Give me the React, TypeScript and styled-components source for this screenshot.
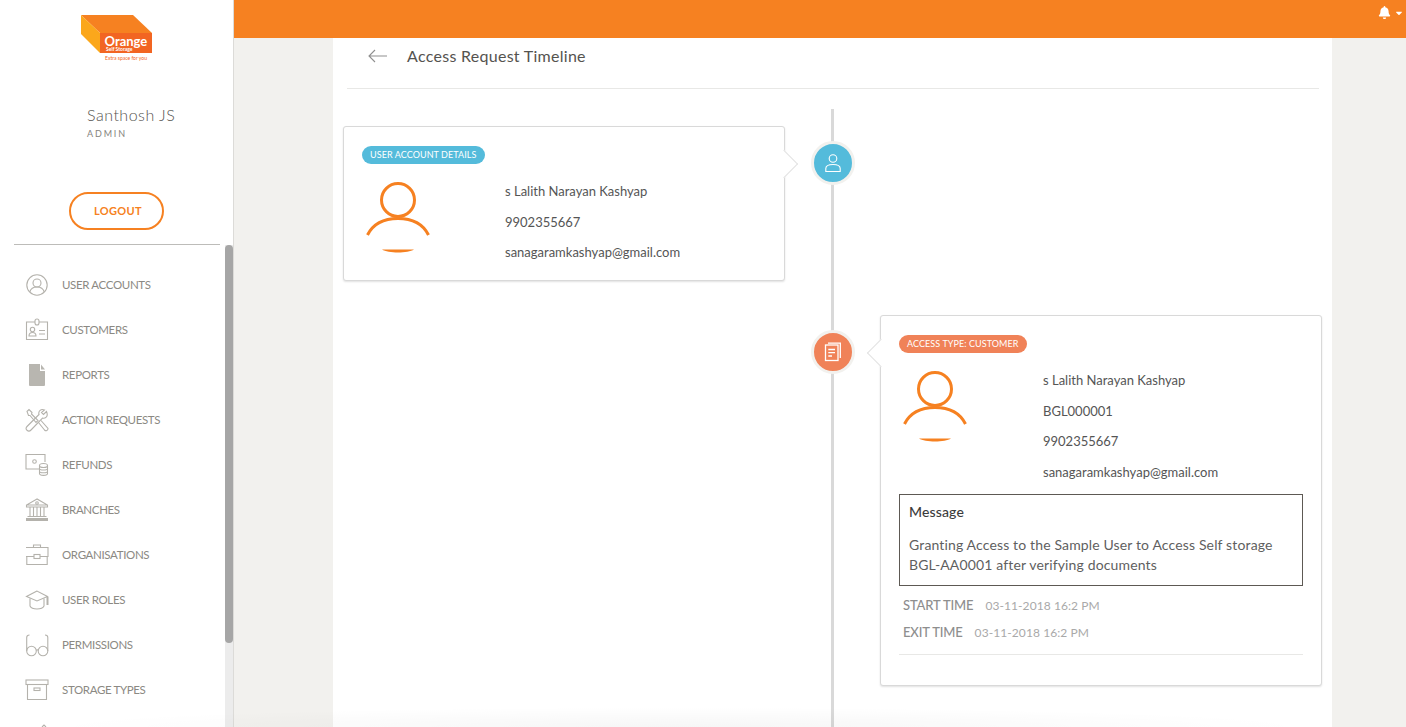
import React from "react";
import styled, { createGlobalStyle } from "styled-components";
import { FaBell, FaCaretDown } from "react-icons/fa";

const Global = createGlobalStyle`
  html, body { margin: 0; height: 100%; overflow: hidden; background: #f2f1ee; }
  * { box-sizing: border-box; }
  body { font-family: Lato, "Noto Sans", sans-serif; color: #4a4a4a; }
`;

const Page = styled.div`
  position: relative;
  display: flex;
  height: 727px;
  overflow: hidden;
`;
const Sidebar = styled.aside`
  flex: 0 0 234px;
  display: flex;
  flex-direction: column;
  background: #fff;
  border-right: 1px solid #dcdbd8;
`;
const LogoWrap = styled.div`
  padding: 15px 0 0 81px;
  height: 105px;
  svg { display: block; }
`;
const Profile = styled.div`
  padding-left: 87px;
  height: 87px;
`;
const UserName = styled.div`
  font-size: 16px;
  line-height: 20px;
  font-weight: 300;
  color: #55534f;
  letter-spacing: 0.5px;
`;
const UserRole = styled.div`
  font-size: 9px;
  line-height: 12px;
  margin-top: 3px;
  letter-spacing: 1.85px;
  color: #85837d;
`;
const LogoutButton = styled.button`
  display: block;
  margin-left: 69px;
  width: 95px;
  height: 38px;
  padding: 0 0 2px 3px;
  border: 2px solid #f68121;
  border-radius: 19px;
  background: #fff;
  color: #f68121;
  font: 700 11px Lato, sans-serif;
  letter-spacing: 0.3px;
`;
const SideRule = styled.hr`
  margin: 14px 13px 0 14px;
  border: 0;
  border-top: 1px solid #bdbcb9;
  height: 1px;
`;
const MenuArea = styled.div`
  flex: 1;
  min-height: 0;
  display: flex;
  justify-content: space-between;
  overflow: hidden;
`;
const Menu = styled.nav`
  padding: 17px 0 0 25px;
  flex: 1;
`;
const MenuItem = styled.div`
  height: 45px;
  display: flex;
  align-items: center;
  gap: 13px;
  font-size: 11.5px;
  letter-spacing: -0.35px;
  font-weight: 400;
  color: #8b8983;
  text-transform: uppercase;
  svg { flex: none; display: block; }
`;
const ScrollTrack = styled.div`
  flex: 0 0 8px;
  background: #ececec;
`;
const ScrollThumb = styled.div`
  height: 398px;
  background: #a6a6a6;
  border-radius: 4px;
`;

const Main = styled.main`
  flex: 1;
  min-width: 0;
  display: flex;
  flex-direction: column;
`;
const TopBar = styled.header`
  flex: 0 0 38px;
  background: #f68121;
  color: #fff;
  display: flex;
  justify-content: flex-end;
  align-items: flex-start;
  padding: 6px 2px 0 0;
  gap: 3px;
  svg { display: block; }
`;
const Content = styled.div`
  flex: 1;
  min-height: 0;
  padding-left: 99px;
  overflow: hidden;
`;
const Panel = styled.section`
  width: 999px;
  height: 100%;
  background: #fff;
  padding: 0 10px;
  display: flex;
  flex-direction: column;
`;
const PanelHead = styled.div`
  flex: none;
  display: flex;
  align-items: center;
  gap: 20px;
  height: 51px;
  margin: 0 3px 0 4px;
  padding: 0 0 15px 21px;
  border-bottom: 1px solid #e8e8e6;
  svg { display: block; }
`;
const PanelTitle = styled.h1`
  margin: 0;
  font-size: 16px;
  font-weight: 400;
  color: #55534f;
  letter-spacing: 0.28px;
`;
const Timeline = styled.div`
  position: relative;
  flex: 1;
  margin-top: 20px;
  padding-top: 17px;
  display: grid;
  grid-template-columns: 442px 95px 442px;
  grid-auto-rows: min-content;
  row-gap: 34px;
  &::before {
    content: "";
    position: absolute;
    top: 0;
    bottom: 0;
    left: 488px;
    width: 3px;
    background: #d9d9d9;
  }
`;
const Card = styled.article<{ $side: "left" | "right"; $height: number }>`
  position: relative;
  grid-column: ${(p) => (p.$side === "left" ? 1 : 3)};
  height: ${(p) => p.$height}px;
  background: #fff;
  border: 1px solid #d9d9d9;
  border-radius: 3px;
  box-shadow: 0 1px 2px rgba(0, 0, 0, 0.12);
  padding: 19px 18px;
  &::after {
    content: "";
    position: absolute;
    top: 27px;
    width: 19px;
    height: 19px;
    background: #fff;
    transform: rotate(45deg);
    ${(p) =>
      p.$side === "left"
        ? "right: -10px; border-top: 1px solid #e2e2e2; border-right: 1px solid #e2e2e2;"
        : "left: -10px; border-bottom: 1px solid #e2e2e2; border-left: 1px solid #e2e2e2;"}
  }
`;
const MarkerCell = styled.div`
  position: relative;
  grid-column: 2;
  display: flex;
  justify-content: center;
  padding-top: 15px;
`;
const Marker = styled.div<{ $color: string }>`
  width: 44px;
  height: 44px;
  border-radius: 50%;
  background: ${(p) => p.$color};
  border: 3px solid #f2f1ee;
  display: flex;
  align-items: center;
  justify-content: center;
  svg { display: block; }
`;
const Pill = styled.span<{ $color: string }>`
  display: inline-block;
  height: 18px;
  line-height: 18px;
  padding: 0 8px;
  border-radius: 9px;
  background: ${(p) => p.$color};
  color: #fff;
  font-size: 9px;
  text-transform: uppercase;
  letter-spacing: 0.08px;
  vertical-align: top;
`;
const CardBody = styled.div<{ $offset: number }>`
  display: grid;
  grid-template-columns: ${(p) => p.$offset}px 1fr;
  margin-top: 16px;
`;
const AvatarCell = styled.div`
  padding-left: 2px;
  svg { display: block; }
`;
const Details = styled.div`
  font-size: 13px;
  color: #555;
  margin-top: -5px;
`;
const DetailLine = styled.div`
  height: 30.7px;
  line-height: 30.7px;
`;
const MessageBox = styled.div`
  margin-top: 6px;
  height: 92px;
  border: 1px solid #5d5954;
  padding: 7px 9px;
  font-size: 14px;
  line-height: 20px;
  color: #5f5f5f;
  letter-spacing: 0.14px;
`;
const MessageTitle = styled.div`
  color: #3c3c3c;
  font-weight: 500;
  margin-bottom: 13px;
`;
const TimeList = styled.div`
  padding: 6px 0 8px 4px;
  border-bottom: 1px solid #e8e8e6;
`;
const TimeRow = styled.div`
  display: flex;
  align-items: center;
  gap: 12px;
  height: 27px;
`;
const TimeLabel = styled.span`
  font-size: 13px;
  color: #8e8e8e;
  font-weight: 500;
  letter-spacing: -0.15px;
`;
const TimeValue = styled.span`
  font-size: 12px;
  color: #a9a9a9;
  letter-spacing: 0.08px;
`;
const BottomFade = styled.div`
  position: absolute;
  left: 0;
  right: 0;
  bottom: 0;
  height: 20px;
  pointer-events: none;
  background: radial-gradient(ellipse 640px 20px at 680px 100%, rgba(0, 0, 0, 0.035), rgba(0, 0, 0, 0));
`;

const Logo = () => (
  <svg width="72" height="48" viewBox="0 0 72 48">
    <path d="M0 0H52L71 18H19Z" fill="#f68121" />
    <path d="M0 0L19 18V38L0 19Z" fill="#fba71b" />
    <rect x="19" y="18" width="52" height="20" fill="#f26522" />
    <text x="23.5" y="30.5" fill="#fff" fontSize="13" fontWeight="700" fontFamily="Lato, sans-serif">Orange</text>
    <text x="25" y="36" fill="#fff" fontSize="5" fontWeight="700" fontFamily="Lato, sans-serif">Self Storage</text>
    <text x="24" y="45" fill="#f26522" fontSize="5" fontFamily="Lato, sans-serif">Extra space for you</text>
  </svg>
);

const S = "#b4b2ac";
const ic = { width: 24, height: 24, viewBox: "0 0 24 24", fill: "none", stroke: S, strokeWidth: 1.1 };

const UserIcon = () => (
  <svg {...ic}>
    <circle cx="12" cy="12" r="10.2" />
    <circle cx="12" cy="10" r="4" />
    <path d="M4.800 19c1-3.600 3.800-5 7.200-5s6.200 1.400 7.200 5" />
  </svg>
);
const BadgeIcon = () => (
  <svg {...ic}>
    <path d="M10 4H1.500V21.500H22.500V4H14" />
    <rect x="10" y="1" width="4" height="6" rx="2" />
    <circle cx="7.500" cy="11.500" r="2.200" />
    <path d="M4 18c0-2.500 1.500-3.500 3.500-3.500S11 15.500 11 18ZM14 12.500h6M14 16h6" />
  </svg>
);
const FileIcon = () => (
  <svg width="24" height="24" viewBox="0 0 24 24">
    <path d="M4 1H15V8H20V22a1 1 0 0 1-1 1H5a1 1 0 0 1-1-1Z" fill="#b8b6b0" />
    <path d="M16 1.500L20 6.500H16Z" fill="#b8b6b0" />
  </svg>
);
const ToolsIcon = () => (
  <svg {...ic}>
    <path d="M2 3.500L4 1.500 7 4.500 6.500 6 13 12.500 11 14.500 5 7.500 3.500 7.500Z" />
    <path d="M21.500 3.500L18.500 6.500 16.500 4.500 19.500 2C16 .5 13 3 14 6.500L2 18.500C.5 20 1 21.500 2 22.300S4.500 23.500 6 22L17.500 10C21 11 23.500 8 21.500 3.500Z" />
    <path d="M13.500 14.500L19.500 22C21 23.500 23 22.500 23 20.500L16 12.500" />
  </svg>
);
const RefundIcon = () => (
  <svg {...ic}>
    <path d="M14.500 16H1V1.500H20V9" />
    <circle cx="9.500" cy="8.500" r="1.800" />
    <ellipse cx="18.500" cy="12.500" rx="4" ry="2" />
    <path d="M14.500 12.500V20.500C14.500 23 22.500 23 22.500 20.500V12.500M14.500 15.500C14.500 17.500 22.500 17.500 22.500 15.500M14.500 18.300C14.500 20.300 22.500 20.300 22.500 18.300" />
  </svg>
);
const BankIcon = () => (
  <svg {...ic}>
    <path d="M12 1L1.500 7V9H22.500V7ZM1.500 7H22.500" />
    <circle cx="12" cy="5" r="1.300" />
    <path d="M5 9V18.500M8.500 9V18.500M12 9V18.500M15.500 9V18.500M19 9V18.500M2.500 18.500H21.500" />
    <rect x="1" y="20" width="22" height="3" fill={S} stroke="none" />
  </svg>
);
const CaseIcon = () => (
  <svg {...ic}>
    <path d="M8.500 4.500V2H15.500V4.500" />
    <path d="M1 4.500H23V13.500H15M9 13.500H1Z" />
    <path d="M1.800 13.500V21.500H22.200V13.500" />
    <rect x="9" y="11.500" width="6" height="4" />
  </svg>
);
const CapIcon = () => (
  <svg {...ic}>
    <path d="M12 3L1.500 8.500 12 13 22.500 8.500Z" />
    <path d="M5 10.500V18C7 22 17 22 19 18V10.500" />
    <path d="M22.500 9V17" strokeWidth="2" />
  </svg>
);
const GlassesIcon = () => (
  <svg {...ic}>
    <circle cx="6.500" cy="18" r="4.800" />
    <circle cx="18" cy="18" r="4.800" />
    <path d="M11.300 17.500C11.800 16.500 12.700 16.500 13.200 17.500M1.700 18V4.500C1.700 2.800 2.800 2 4.500 2M22.800 18V4.500C22.800 2.800 21.700 2 20 2" />
  </svg>
);
const BoxIcon = () => (
  <svg {...ic}>
    <rect x="1" y="2" width="22" height="4.500" />
    <path d="M2.500 6.500V21.500H21.500V6.500" />
    <rect x="9" y="10" width="6" height="2.500" />
  </svg>
);
const MoreIcon = () => (
  <svg {...ic}>
    <path d="M17 4L19 2 21 4" />
  </svg>
);

const menu: [string, React.FC][] = [
  ["User Accounts", UserIcon],
  ["Customers", BadgeIcon],
  ["Reports", FileIcon],
  ["Action Requests", ToolsIcon],
  ["Refunds", RefundIcon],
  ["Branches", BankIcon],
  ["Organisations", CaseIcon],
  ["User Roles", CapIcon],
  ["Permissions", GlassesIcon],
  ["Storage Types", BoxIcon],
  ["", MoreIcon],
];

const Avatar = () => (
  <svg width="68" height="74" viewBox="0 0 68 74" fill="none" stroke="#f68121">
    <circle cx="34" cy="19" r="16.500" strokeWidth="3" />
    <path d="M3.500 54C9 43 20 37.500 34 37.500S59 43 64.500 54" strokeWidth="3" />
    <path d="M18 68.500H50C44 72.500 24 72.500 18 68.500Z" fill="#f68121" stroke="none" />
  </svg>
);

const MarkerUser = () => (
  <svg width="20" height="20" viewBox="0 0 20 20" fill="none" stroke="#fff" strokeWidth="1.1">
    <circle cx="10" cy="5.500" r="3.800" />
    <path d="M2.800 18.500V15.500C2.800 13 6 11.500 10 11.500S17.200 13 17.200 15.500V18.500Z" />
  </svg>
);
const MarkerDoc = () => (
  <svg width="20" height="20" viewBox="0 0 20 20" fill="none" stroke="#fff" strokeWidth="1.300">
    <rect x="2.500" y="3" width="12.500" height="15.500" />
    <path d="M5 1.200H17.300V16M5.300 7.500H12M5.300 10.700H12M5.300 14H9" />
  </svg>
);

const BackArrow = () => (
  <svg width="19" height="14" viewBox="0 0 19 14" fill="none" stroke="#8f8f8f" strokeWidth="1.100">
    <path d="M19 7H1M7 1L1 7L7 13" />
  </svg>
);

export default function App() {
  return (
    <Page>
      <Global />
      <Sidebar>
        <LogoWrap>
          <Logo />
        </LogoWrap>
        <Profile>
          <UserName>Santhosh JS</UserName>
          <UserRole>ADMIN</UserRole>
        </Profile>
        <LogoutButton>LOGOUT</LogoutButton>
        <SideRule />
        <MenuArea>
          <Menu>
            {menu.map(([label, Icon], i) => (
              <MenuItem key={i}>
                <Icon />
                {label}
              </MenuItem>
            ))}
          </Menu>
          <ScrollTrack>
            <ScrollThumb />
          </ScrollTrack>
        </MenuArea>
      </Sidebar>
      <Main>
        <TopBar>
          <FaBell size={13} />
          <FaCaretDown size={10} style={{ marginTop: 2 }} />
        </TopBar>
        <Content>
          <Panel>
            <PanelHead>
              <BackArrow />
              <PanelTitle>Access Request Timeline</PanelTitle>
            </PanelHead>
            <Timeline>
              <Card $side="left" $height={155}>
                <Pill $color="#54bbdb">User Account Details</Pill>
                <CardBody $offset={143}>
                  <AvatarCell>
                    <Avatar />
                  </AvatarCell>
                  <Details>
                    <DetailLine>s Lalith Narayan Kashyap</DetailLine>
                    <DetailLine>9902355667</DetailLine>
                    <DetailLine>sanagaramkashyap@gmail.com</DetailLine>
                  </Details>
                </CardBody>
              </Card>
              <MarkerCell>
                <Marker $color="#54bbdb">
                  <MarkerUser />
                </Marker>
              </MarkerCell>
              <MarkerCell>
                <Marker $color="#f08258">
                  <MarkerDoc />
                </Marker>
              </MarkerCell>
              <Card $side="right" $height={371}>
                <Pill $color="#f08258">Access Type: Customer</Pill>
                <CardBody $offset={144}>
                  <AvatarCell>
                    <Avatar />
                  </AvatarCell>
                  <Details>
                    <DetailLine>s Lalith Narayan Kashyap</DetailLine>
                    <DetailLine>BGL000001</DetailLine>
                    <DetailLine>9902355667</DetailLine>
                    <DetailLine>sanagaramkashyap@gmail.com</DetailLine>
                  </Details>
                </CardBody>
                <MessageBox>
                  <MessageTitle>Message</MessageTitle>
                  Granting Access to the Sample User to Access Self storage BGL-AA0001 after verifying documents
                </MessageBox>
                <TimeList>
                  <TimeRow>
                    <TimeLabel>START TIME</TimeLabel>
                    <TimeValue>03-11-2018 16:2 PM</TimeValue>
                  </TimeRow>
                  <TimeRow>
                    <TimeLabel>EXIT TIME</TimeLabel>
                    <TimeValue>03-11-2018 16:2 PM</TimeValue>
                  </TimeRow>
                </TimeList>
              </Card>
            </Timeline>
          </Panel>
        </Content>
      </Main>
      <BottomFade />
    </Page>
  );
}
